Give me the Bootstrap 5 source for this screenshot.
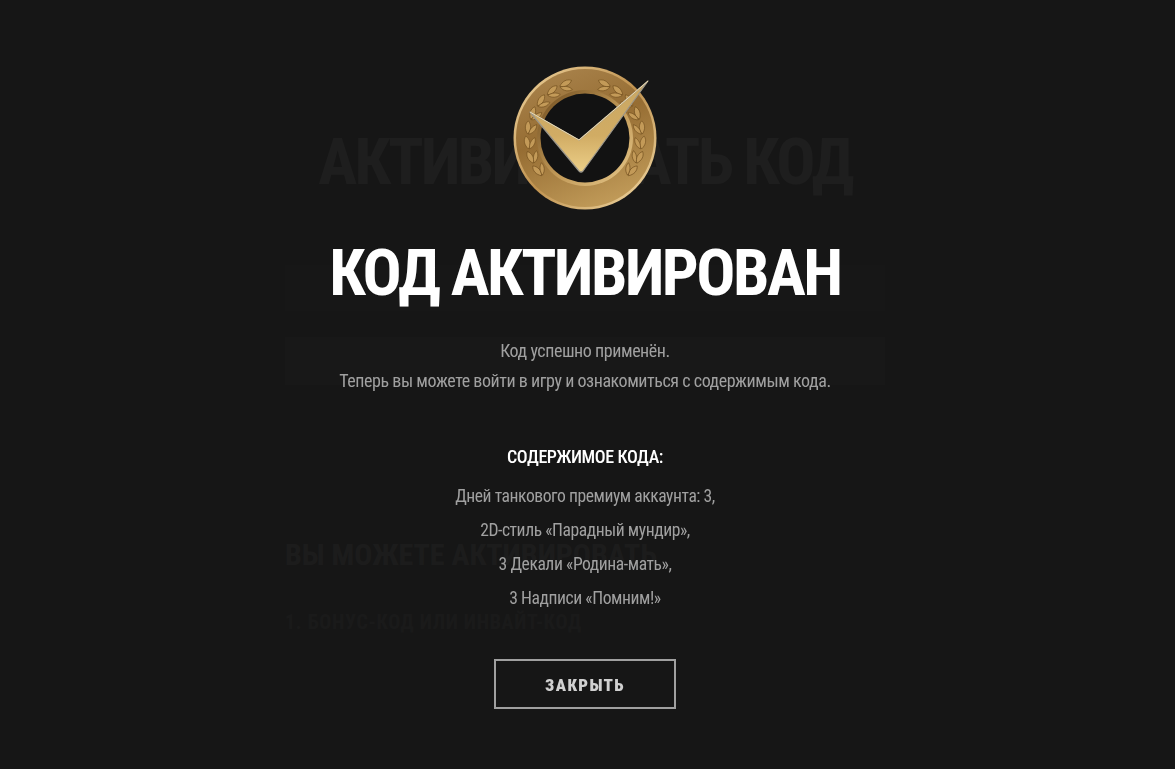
<!DOCTYPE html>
<html lang="ru">
<head>
  <meta charset="UTF-8">
  <meta name="viewport" content="width=device-width, initial-scale=1.0">
  <title>Код активирован</title>
  <link href="https://cdn.jsdelivr.net/npm/bootstrap@5.3.0/dist/css/bootstrap.min.css" rel="stylesheet">
  <style>
    html, body { height: 100%; overflow: hidden; }
    body { background: #161616; font-family: "Roboto", "Liberation Sans Narrow", "Liberation Sans", sans-serif; font-stretch: condensed; padding-right: 5px; }

    /* page behind the overlay */
    .page-wrap { width: 600px; margin: 0 auto; padding-top: 127px; color: #aaa; }
    .page-title { font-size: 65px; line-height: 70px; font-weight: 700; letter-spacing: -2.7px; margin: 0 0 68px; white-space: nowrap; }
    .page-field { height: 46px; background: #2a2a2a; margin-bottom: 26px; }
    .page-btn { height: 48px; background: #3a3a3a; margin-bottom: 151px; }
    .page-sub { font-size: 30px; line-height: 38px; font-weight: 700; margin: 0 0 36px; color: #8c8c8c; }
    .page-sub2 { font-size: 20px; line-height: 24px; font-weight: 700; margin: 0 0 26px; letter-spacing: .7px; color: #666; }
    .page-line { height: 11px; background: #222; margin-bottom: 14px; }

    /* modal */
    .code-overlay { position: fixed; inset: 0; background: rgba(22, 22, 22, .95); color: #a0a0a0; padding: 66px 5px 0 0; }
    .code-badge { width: 146px; height: 146px; display: block; margin-left: -1px; }
    .code-title { color: #fff; font-size: 65px; line-height: 80px; font-weight: 700; letter-spacing: -2.5px; margin: 21px 0 26px; white-space: nowrap; }
    .code-text { font-size: 18px; line-height: 24px; letter-spacing: -.45px; margin-bottom: 6px; }
    .code-head { color: #fff; font-size: 18px; line-height: 24px; font-weight: 500; letter-spacing: -.4px; margin: 46px 0 15px; }
    .code-item { font-size: 17.6px; line-height: 24px; letter-spacing: -.45px; margin-bottom: 10px; }
    .code-close { width: 182px; height: 50px; border: 2px solid #a0a0a0; border-radius: 0; color: #d0d0d0; background: transparent; font-size: 17px; font-weight: 900; font-stretch: condensed; letter-spacing: 1.3px; margin-top: 39px; padding: 3px 0 0; }
    .code-close:hover { color: #fff; border-color: #fff; }
  </style>
</head>
<body>
  <div class="page-wrap">
    <h1 class="page-title text-center">АКТИВИРОВАТЬ КОД</h1>
    <div class="page-field"></div>
    <div class="page-btn"></div>
    <h2 class="page-sub">ВЫ МОЖЕТЕ АКТИВИРОВАТЬ</h2>
    <h3 class="page-sub2">1. БОНУС-КОД ИЛИ ИНВАЙТ-КОД</h3>
    <div class="page-line"></div>
    <div class="page-line"></div>
    <div class="page-line"></div>
  </div>

  <div class="code-overlay d-flex flex-column align-items-center text-center">
    <svg class="code-badge" viewBox="0 0 146 146" aria-hidden="true">
      <defs>
        <linearGradient id="ringGrad" x1="0.2" y1="0" x2="0.6" y2="1">
          <stop offset="0" stop-color="#a9834c"/>
          <stop offset=".45" stop-color="#966d33"/>
          <stop offset="1" stop-color="#c09a58"/>
        </linearGradient>
        <linearGradient id="edgeGrad" x1="0" y1="0" x2="1" y2="1">
          <stop offset="0" stop-color="#efd5a0"/>
          <stop offset=".5" stop-color="#c0924f"/>
          <stop offset="1" stop-color="#f3dca8"/>
        </linearGradient>
        <linearGradient id="holeGrad" x1="0" y1="0" x2="1" y2="1">
          <stop offset="0" stop-color="#6d4a1d"/>
          <stop offset=".55" stop-color="#c29a58"/>
          <stop offset="1" stop-color="#e7c98c"/>
        </linearGradient>
        <linearGradient id="tickGrad" x1="0" y1="0" x2="0" y2="1">
          <stop offset="0" stop-color="#c9a763"/>
          <stop offset=".6" stop-color="#d1ac64"/>
          <stop offset="1" stop-color="#eccf88"/>
        </linearGradient>
        <!-- one leaf pair, drawn on the left of the ring -->
        <g id="leafPair" fill="#c39a58" stroke="#6e4c1c" stroke-width=".6">
          <path d="M16 80c-4-4-5-9-2-13 4 3 5 9 2 13z"/>
          <path d="M17 80c0-5 2-9 6-11 1 4-1 9-6 11z"/>
        </g>
        <g id="wreath">
          <use href="#leafPair" transform="rotate(-33 73 72)"/>
          <use href="#leafPair" transform="rotate(-18 73 72)"/>
          <use href="#leafPair" transform="rotate(-3 73 72)"/>
          <use href="#leafPair" transform="rotate(12 73 72)"/>
          <use href="#leafPair" transform="rotate(27 73 72)"/>
          <use href="#leafPair" transform="rotate(42 73 72)"/>
          <use href="#leafPair" transform="rotate(57 73 72)"/>
          <use href="#leafPair" transform="rotate(72 73 72)"/>
        </g>
      </defs>
      <circle cx="73" cy="72" r="71.5" fill="url(#edgeGrad)"/>
      <circle cx="73" cy="72" r="69" fill="url(#ringGrad)"/>
      <use href="#wreath"/>
      <use href="#wreath" transform="matrix(-1 0 0 1 146 0)"/>
      <circle cx="73" cy="72" r="48" fill="url(#holeGrad)"/>
      <circle cx="73" cy="72" r="44.5" fill="#121212"/>
      <path d="M18 46 67 74 136 15 71 105Q69 107 67 105Z" fill="url(#tickGrad)" stroke="#9b968a" stroke-width="1.2" stroke-linejoin="round"/>
      <path d="M18 46 67 74 136 15" fill="none" stroke="#efdcae" stroke-width="1" stroke-linejoin="round"/>
    </svg>
    <h1 class="code-title">КОД АКТИВИРОВАН</h1>
    <p class="code-text">Код успешно применён.</p>
    <p class="code-text">Теперь вы можете войти в игру и ознакомиться с содержимым кода.</p>
    <p class="code-head">СОДЕРЖИМОЕ КОДА:</p>
    <p class="code-item">Дней танкового премиум аккаунта: 3,</p>
    <p class="code-item">2D-стиль «Парадный мундир»,</p>
    <p class="code-item">3 Декали «Родина-мать»,</p>
    <p class="code-item">3 Надписи «Помним!»</p>
    <button type="button" class="btn code-close">ЗАКРЫТЬ</button>
  </div>
</body>
</html>
